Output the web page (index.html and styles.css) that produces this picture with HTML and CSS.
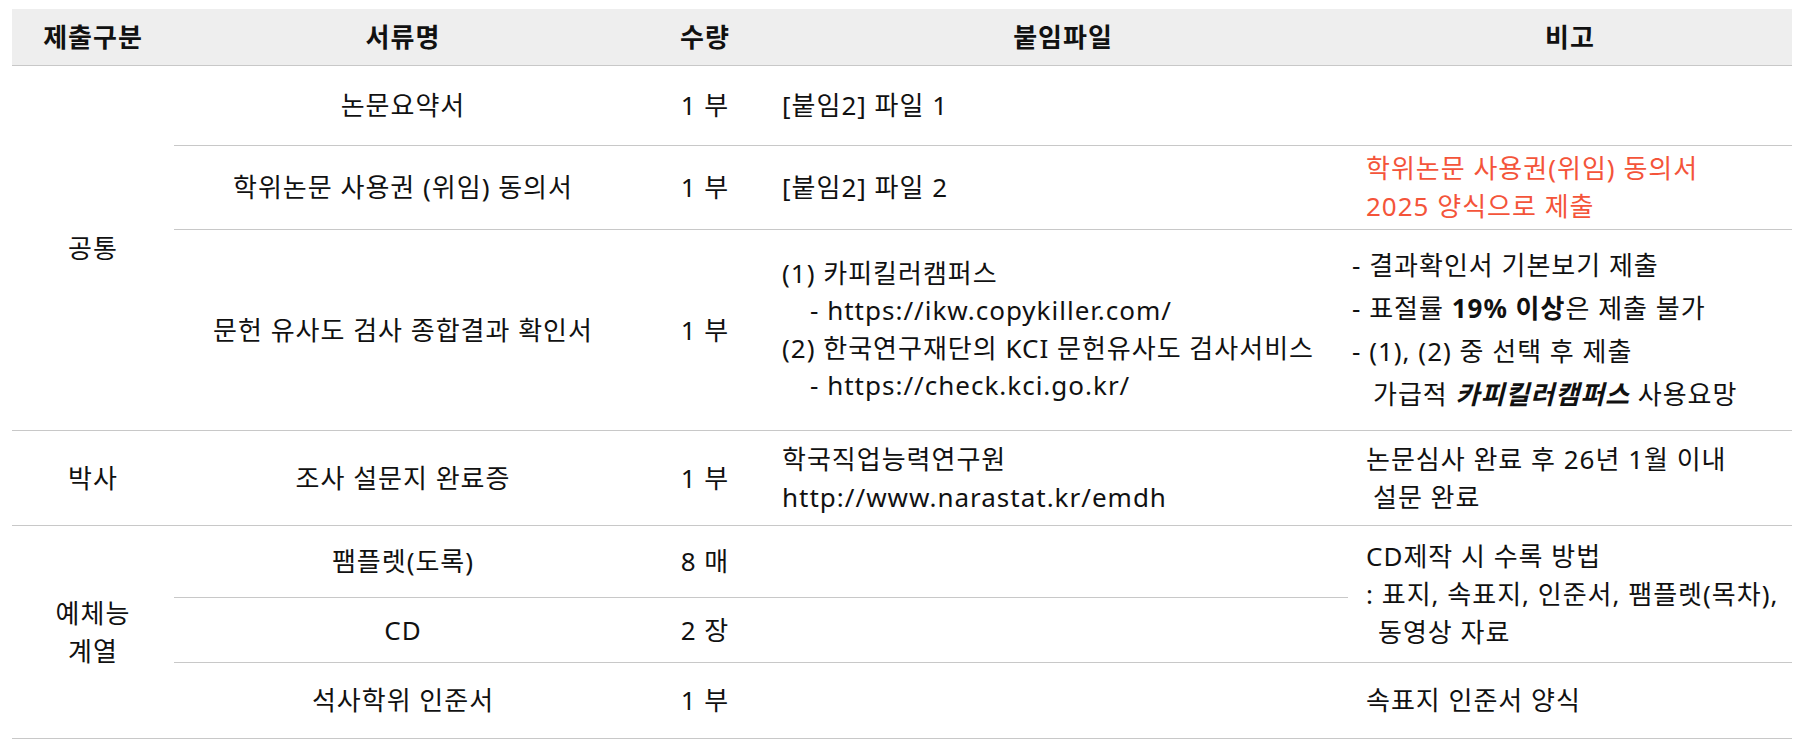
FILE: index.html
```html
<!DOCTYPE html>
<html lang="ko">
<head>
<meta charset="utf-8">
<title>제출서류</title>
<link rel="stylesheet" href="styles.css">
</head>
<body>
<table class="docs">
  <colgroup>
    <col class="c1"><col class="c2"><col class="c3"><col class="c4"><col class="c5">
  </colgroup>
  <thead>
    <tr class="head">
      <th>제출구분</th><th>서류명</th><th>수량</th><th>붙임파일</th><th>비고</th>
    </tr>
  </thead>
  <tbody>
    <tr class="r1">
      <td class="cat" rowspan="3">공통</td>
      <td>논문요약서</td>
      <td>1 부</td>
      <td class="file">[붙임2] 파일 1</td>
      <td class="note"></td>
    </tr>
    <tr class="r2">
      <td>학위논문 사용권 (위임) 동의서</td>
      <td>1 부</td>
      <td class="file">[붙임2] 파일 2</td>
      <td class="note red">학위논문 사용권(위임) 동의서<br>2025 양식으로 제출</td>
    </tr>
    <tr class="r3">
      <td>문헌 유사도 검사 종합결과 확인서</td>
      <td>1 부</td>
      <td class="file tight">
        <div>(1) 카피킬러캠퍼스</div>
        <div class="sub">- https://ikw.copykiller.com/</div>
        <div>(2) 한국연구재단의 KCI 문헌유사도 검사서비스</div>
        <div class="sub">- https://check.kci.go.kr/</div>
      </td>
      <td class="note">
        <div class="items">
          <div class="item">- 결과확인서 기본보기 제출</div>
          <div class="item">- 표절률 <b>19% 이상</b>은 제출 불가</div>
          <div class="item">- (1), (2) 중 선택 후 제출</div>
          <div class="item cont">가급적 <b><i>카피킬러캠퍼스</i></b> 사용요망</div>
        </div>
      </td>
    </tr>
    <tr class="r4">
      <td class="cat">박사</td>
      <td>조사 설문지 완료증</td>
      <td>1 부</td>
      <td class="file">학국직업능력연구원<br>http://www.narastat.kr/emdh</td>
      <td class="note">논문심사 완료 후 26년 1월 이내<br><span class="ind1">설문 완료</span></td>
    </tr>
    <tr class="r5">
      <td class="cat" rowspan="3">예체능<br>계열</td>
      <td>팸플렛(도록)</td>
      <td>8 매</td>
      <td class="file"></td>
      <td class="note" rowspan="2">CD제작 시 수록 방법<br>: 표지, 속표지, 인준서, 팸플렛(목차),<br><span class="ind2">동영상 자료</span></td>
    </tr>
    <tr class="r6">
      <td>CD</td>
      <td>2 장</td>
      <td class="file"></td>
    </tr>
    <tr class="r7">
      <td>석사학위 인준서</td>
      <td>1 부</td>
      <td class="file"></td>
      <td class="note">속표지 인준서 양식</td>
    </tr>
  </tbody>
</table>
</body>
</html>
```

FILE: styles.css
```css
body {
  margin: 0;
  background: #ffffff;
  font-family: "Noto Sans", "Noto Sans CJK KR", sans-serif;
  color: #111111;
}

.docs {
  border-collapse: collapse;
  table-layout: fixed;
  width: 1780px;
  margin: 9px 0 0 12px;
  font-size: 26px;
  letter-spacing: 1px;
  line-height: 38px;
}

.c1 { width: 162px; }
.c2 { width: 458px; }
.c3 { width: 146px; }
.c4 { width: 570px; }
.c5 { width: 444px; }

.docs th {
  background: #eeeeee;
  font-weight: 700;
  padding: 0;
  text-align: center;
  border-bottom: 1px solid #c8c8c8;
}

.docs td {
  padding: 0;
  text-align: center;
  vertical-align: middle;
  border-bottom: 1px solid #c8c8c8;
}

.head { height: 56px; }
.r1 { height: 80px; }
.r2 { height: 84px; }
.r3 { height: 201px; }
.r4 { height: 95px; }
.r5 { height: 72px; }
.r6 { height: 65px; }
.r7 { height: 76px; }

.docs td.file {
  text-align: left;
  padding-left: 4px;
}

.docs td.tight {
  line-height: 37.5px;
}

.sub {
  padding-left: 28px;
}

.docs td.note {
  text-align: left;
  padding-left: 18px;
}

.red {
  color: #f4543a;
}

.items {
  margin-left: -14px;
}

.item {
  margin: 4px 0 5px;
}

.item.cont {
  padding-left: 21px;
}

.ind1 { padding-left: 7px; }
.ind2 { padding-left: 12px; }
```
